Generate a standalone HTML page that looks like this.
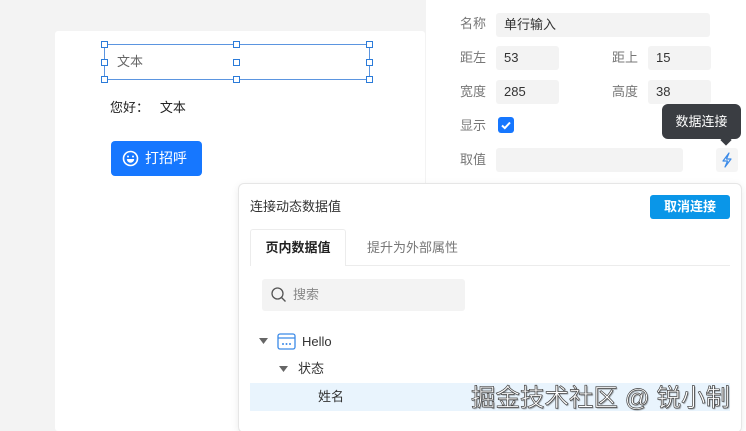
<!DOCTYPE html>
<html><head><meta charset="utf-8"><style>
*{box-sizing:border-box;margin:0;padding:0}
html,body{width:746px;height:431px;overflow:hidden}
body{position:relative;background:#f3f3f3;font-family:"Liberation Sans","Noto Sans CJK SC",sans-serif;font-size:13px;color:#333;line-height:1.42}
.a{position:absolute}
.canvas{left:55px;top:31px;width:370px;height:400px;background:#fff;border-radius:3px}
.panel{left:426px;top:0;width:320px;height:431px;background:#fff}
.h{position:absolute;width:7px;height:7px;border:1px solid #2b7bd9;background:#fff}
.lbl{color:#777;font-size:13px}
.inp{background:#f3f3f3;border-radius:3px;height:24px;line-height:24px;padding-left:8px;color:#333}
.pop{left:238px;top:183px;width:504px;height:250px;background:#fff;border:1px solid #e6e6e6;border-radius:6px;box-shadow:0 2px 8px rgba(0,0,0,.08)}
</style></head><body>
<div class="a canvas"></div>
<div class="a" style="left:104px;top:44px;width:266px;height:36px;border:1px solid #5b95e0"></div>
<div class="h" style="left:101px;top:41px"></div><div class="h" style="left:233px;top:41px"></div><div class="h" style="left:366px;top:41px"></div>
<div class="h" style="left:101px;top:59px"></div><div class="h" style="left:233px;top:59px"></div><div class="h" style="left:366px;top:59px"></div>
<div class="h" style="left:101px;top:76px"></div><div class="h" style="left:233px;top:76px"></div><div class="h" style="left:366px;top:76px"></div>
<div class="a" style="left:117px;top:53px;color:#666;font-size:13px">文本</div>
<div class="a" style="left:110px;top:99px;font-size:13px;color:#222">您好：&nbsp;&nbsp;&nbsp;文本</div>
<div class="a" style="left:111px;top:141px;width:91px;height:35px;background:#1677ff;border-radius:4px;color:#fff;font-size:14px;line-height:34px;padding-left:34px">打招呼</div>
<svg class="a" style="left:122px;top:150px" width="17" height="17" viewBox="0 0 17 17"><circle cx="8.5" cy="8.5" r="7" fill="none" stroke="#fff" stroke-width="1.6"/><circle cx="6" cy="6.5" r="1" fill="#fff"/><circle cx="11" cy="6.5" r="1" fill="#fff"/><path d="M4.8 9h7.4a3.7 3.7 0 0 1-7.4 0z" fill="#fff"/></svg>

<div class="a panel"></div>
<div class="a lbl" style="left:460px;top:15px">名称</div><div class="a inp" style="left:496px;top:13px;width:214px">单行输入</div>
<div class="a lbl" style="left:460px;top:49px">距左</div><div class="a inp" style="left:496px;top:46px;width:63px">53</div>
<div class="a lbl" style="left:612px;top:49px">距上</div><div class="a inp" style="left:648px;top:46px;width:63px">15</div>
<div class="a lbl" style="left:460px;top:83px">宽度</div><div class="a inp" style="left:496px;top:80px;width:63px">285</div>
<div class="a lbl" style="left:612px;top:83px">高度</div><div class="a inp" style="left:648px;top:80px;width:63px">38</div>
<div class="a lbl" style="left:460px;top:117px">显示</div>
<div class="a" style="left:498px;top:117px;width:16px;height:16px;background:#1677ff;border-radius:3px"></div>
<svg class="a" style="left:498px;top:117px" width="16" height="16"><path d="M4 8.5l2.8 2.6L12 5.5" fill="none" stroke="#fff" stroke-width="2"/></svg>
<div class="a lbl" style="left:460px;top:151px">取值</div><div class="a inp" style="left:496px;top:148px;width:187px"></div>
<div class="a" style="left:716px;top:148px;width:22px;height:24px;background:#f5f5f5;border-radius:3px"></div>
<svg class="a" style="left:720px;top:152px" width="14" height="16" viewBox="0 0 14 16"><path d="M9 1L3 9h4.5L5 15l6-8H6.5z" fill="none" stroke="#3b8ae8" stroke-width="1.2" stroke-linejoin="round"/></svg>
<div class="a" style="left:662px;top:104px;width:79px;height:35px;background:#3a3d42;border-radius:6px;color:#fff;font-size:13px;line-height:35px;text-align:center">数据连接</div>
<div class="a" style="left:722px;top:136px;width:8px;height:8px;background:#3a3d42;transform:rotate(45deg)"></div>

<div class="a pop"></div>
<div class="a" style="left:250px;top:198px;font-size:13px;color:#333">连接动态数据值</div>
<div class="a" style="left:650px;top:195px;width:80px;height:24px;background:#0a96e8;border-radius:3px;color:#fff;font-weight:bold;font-size:13px;line-height:24px;text-align:center">取消连接</div>
<div class="a" style="left:250px;top:265px;width:480px;height:1px;background:#ececec"></div>
<div class="a" style="left:250px;top:229px;width:96px;height:37px;border:1px solid #ececec;border-bottom:none;border-radius:3px 3px 0 0;background:#fff;font-weight:bold;font-size:13px;line-height:36px;text-align:center;color:#222">页内数据值</div>
<div class="a" style="left:367px;top:239px;color:#777;font-size:13px">提升为外部属性</div>
<div class="a" style="left:262px;top:279px;width:203px;height:32px;background:#f3f3f3;border-radius:3px"></div>
<svg class="a" style="left:270px;top:286px" width="18" height="18" viewBox="0 0 18 18"><circle cx="7.5" cy="7.5" r="5.5" fill="none" stroke="#555" stroke-width="1.3"/><path d="M11.5 11.5l4 4" stroke="#555" stroke-width="1.3"/></svg>
<div class="a" style="left:293px;top:286px;color:#888;font-size:13px">搜索</div>
<svg class="a" style="left:259px;top:337px" width="10" height="8"><path d="M0 1h9L4.5 7z" fill="#666"/></svg>
<svg class="a" style="left:277px;top:333px" width="20" height="17" viewBox="0 0 20 17"><rect x="1" y="1" width="17" height="15" rx="2" fill="none" stroke="#3b8ae8" stroke-width="1.3"/><path d="M1 5h17" stroke="#3b8ae8" stroke-width="1.3"/><circle cx="6" cy="11" r="1" fill="#3b8ae8"/><circle cx="9.5" cy="11" r="1" fill="#3b8ae8"/><circle cx="13" cy="11" r="1" fill="#3b8ae8"/></svg>
<div class="a" style="left:302px;top:333px;color:#333;font-size:13px">Hello</div>
<svg class="a" style="left:279px;top:365px" width="10" height="8"><path d="M0 1h9L4.5 7z" fill="#666"/></svg>
<div class="a" style="left:298px;top:360px;color:#333;font-size:13px">状态</div>
<div class="a" style="left:250px;top:383px;width:480px;height:28px;background:#e9f4fd"></div>
<div class="a" style="left:318px;top:388px;color:#333;font-size:13px">姓名</div>
<div class="a" style="left:471px;top:383px;color:#fff;font-size:24.5px;line-height:1.3;-webkit-text-stroke:0.7px #444;text-shadow:1px 1px 1px rgba(0,0,0,.4)">掘金技术社区 @ 锐小制</div>
</body></html>
